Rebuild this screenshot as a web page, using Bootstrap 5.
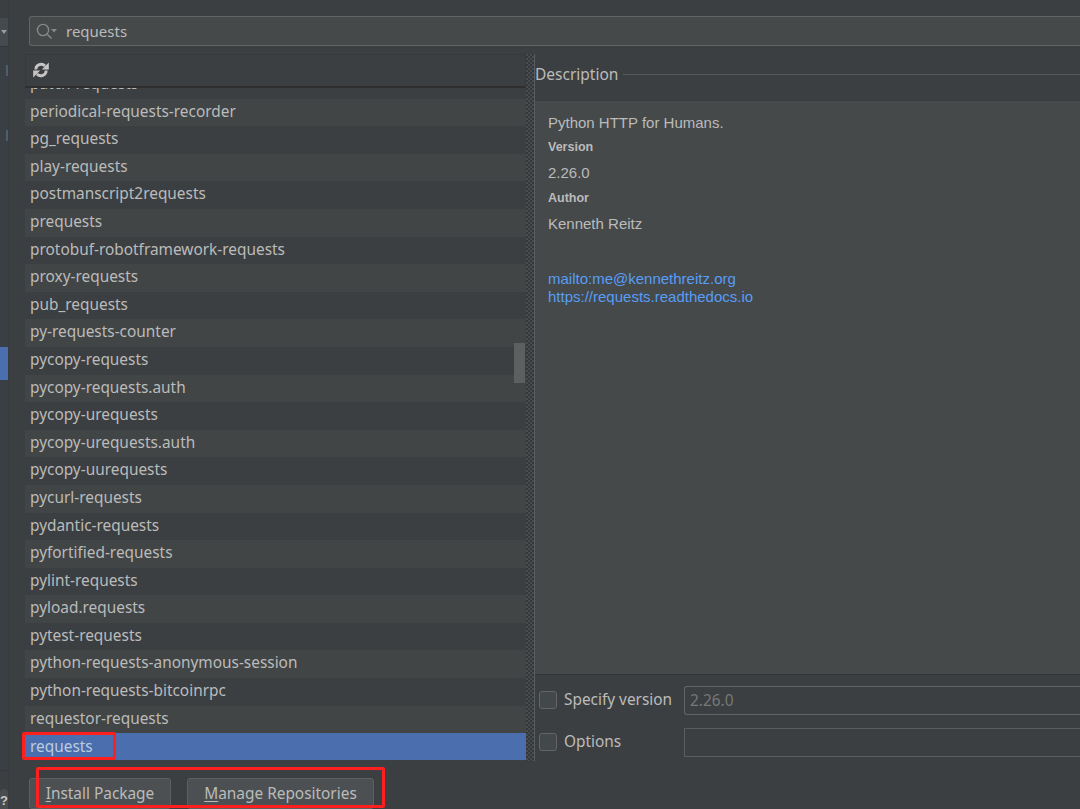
<!DOCTYPE html>
<html lang="en">
<head>
<meta charset="utf-8">
<title>Available Packages</title>
<link href="https://cdn.jsdelivr.net/npm/bootstrap@5.3.0/dist/css/bootstrap.min.css" rel="stylesheet">
<style>
html,body{height:809px;overflow:hidden;background:#3c3f41;}
body{font-family:"Noto Sans",sans-serif;color:#bbbbbb;}
.pg-shell{width:1080px;height:809px;}
.side-strip{width:9px;background:#3a3f46;flex:none;border-right:1px solid #383b3d;overflow:hidden;}
.side-top{height:18px;background:#3c3f41;}
.side-drop{height:29px;background:#454a4e;border-bottom:1px solid #33363a;position:relative;}
.side-drop::after{content:"";position:absolute;left:1px;top:12px;border:3px solid transparent;border-top:4px solid #9a9da0;}
.side-tick{width:2px;height:11px;background:#4c5d70;margin-left:6px;}
.tick-a{margin-top:18px;}
.tick-b{margin-top:54px;}
.side-sel{height:33px;margin-top:206px;background:#4b6eaf;width:8px;}
.side-end{height:39px;margin-top:390px;background:#3c3f41;border-top:1px solid #35383a;padding-top:18px;}
.side-help{width:8px;height:21px;background:#4a4d4f;border-radius:4px 4px 0 0;font:700 13px/24px "Liberation Sans",sans-serif;color:#c8c8c8;text-align:center;}
.dlg{flex:1;min-width:0;height:809px;background:#3c3f41;}
.search-row{height:30px;margin:16px 0 0 20px;background:#45494a;border:1px solid #646464;border-right:0;border-radius:3px 0 0 3px;font-size:15px;line-height:28px;padding-left:36px;position:relative;}
.search-ico{position:absolute;left:6px;top:6px;}
.mid-area{height:707px;margin-top:8px;}
.pkg-pane{width:501px;margin-left:16px;flex:none;}
.pkg-tools{height:34px;border:1px solid #36393a;border-bottom:2px solid #2f2f2f;padding:7px 0 0 7px;background:#3c3f41;}
.pkg-tools svg{display:block;}
.pkg-scroll{height:672px;overflow:hidden;position:relative;background:#3c3f41;}
.pkg-rows{margin-top:-17px;}
.pkg-row{height:27.6px;line-height:25.8px;padding-left:5px;font-size:15.4px;white-space:nowrap;}
.pkg-row:nth-child(even){background:#414546;}
.pkg-row.sel{background:#4b6eaf;color:#bbccdd;line-height:27px;}
.scroll-thumb{position:absolute;right:1px;top:255px;width:11px;height:40px;background:#5d6061;}
.split-bar{width:9px;flex:none;height:707px;border-right:1px solid #5a5d5e;background:repeating-conic-gradient(#35383a 0 25%,#494c4e 0 50%) 0 0/4px 4px;}
.desc-pane{flex:1;min-width:0;}
.desc-head{height:46px;font-size:15.5px;display:flex;align-items:center;padding-bottom:5px;}
.desc-head i{display:block;flex:1;height:1px;background:#55585a;margin-left:5px;}
.desc-body{height:575px;background:#45494a;border-top:1px solid #3a3d3e;border-bottom:1px solid #323435;padding:14px 0 0 13px;font-family:"Liberation Sans",sans-serif;font-size:15px;}
.desc-body p{margin:0;}
.d-text{height:16px;line-height:16px;}
.d-label{font-weight:700;font-size:12.5px;line-height:14px;}
.gap-ver{margin-top:9px!important;}
.gap-val{margin-top:11px!important;}
.gap-auth{margin-top:10px!important;}
.gap-links{margin-top:38px!important;}
.d-link{color:#589df6;height:18px;line-height:18px;}
.opt-row{height:42px;font-size:15.4px;}
.opt-first{margin-top:4px;}
.fake-check{width:18px;height:18px;border:1px solid #646464;border-radius:3px;background:#43494a;margin:0 7px 0 4px;flex:none;}
.opt-label{width:120px;flex:none;}
.opt-input{flex:1;height:29px;border:1px solid #5a5d5e;border-right:0;font-size:15.4px;line-height:27px;padding-left:5px;color:#777;}
.opt-input.ver{border-color:#646464;border-radius:3px 0 0 3px;background:#3c3f41;}
.act-row{margin:17px 0 0 20px;gap:16px;}
.act-btn{height:31px;padding:0;background:#4c5052;color:#bbb;border:1px solid #5e6060;border-radius:3px;font-size:15.4px;line-height:27px;text-align:center;}
.act-btn u{text-underline-offset:2px;}
.btn-install{width:142px;}
.btn-manage{width:187px;}
.red-box{position:absolute;border:3px solid #ff1f1f;border-radius:2px;pointer-events:none;}
.red-a{left:22px;top:732px;width:94px;height:28px;}
.red-b{left:36px;top:767px;width:349px;height:41px;}
</style>
</head>
<body>
<div class="pg-shell d-flex position-relative">
  <div class="side-strip">
    <div class="side-top"></div>
    <div class="side-drop"></div>
    <div class="side-tick tick-a"></div>
    <div class="side-tick tick-b"></div>
    <div class="side-sel"></div>
    <div class="side-end"><div class="side-help">?</div></div>
  </div>
  <div class="dlg">
    <div class="search-row">
      <svg class="search-ico" width="24" height="18" viewBox="0 0 24 18" fill="none" stroke="#85898b" stroke-width="1.4"><circle cx="7" cy="7" r="5.6"/><path d="M11 11l4.500 4.500"/><path d="M15 6h6l-3 3.500z" fill="#85898b" stroke="none"/></svg>
      requests
    </div>
    <div class="mid-area d-flex">
      <div class="pkg-pane">
        <div class="pkg-tools">
          <svg width="16" height="16" viewBox="0 0 16 16" fill="#c6c6c6" stroke="none"><path d="M2.800 7.500A5.300 5.300 0 0 1 12 4" fill="none" stroke="#c6c6c6" stroke-width="2.800"/><path d="M15.800 .6v7H8.800z"/><path d="M13.200 8.500A5.300 5.300 0 0 1 4 12" fill="none" stroke="#c6c6c6" stroke-width="2.800"/><path d="M.2 15.400v-7h7z"/></svg>
        </div>
        <div class="pkg-scroll">
          <div class="pkg-rows">
            <div class="pkg-row">patch-requests</div>
            <div class="pkg-row">periodical-requests-recorder</div>
            <div class="pkg-row">pg_requests</div>
            <div class="pkg-row">play-requests</div>
            <div class="pkg-row">postmanscript2requests</div>
            <div class="pkg-row">prequests</div>
            <div class="pkg-row">protobuf-robotframework-requests</div>
            <div class="pkg-row">proxy-requests</div>
            <div class="pkg-row">pub_requests</div>
            <div class="pkg-row">py-requests-counter</div>
            <div class="pkg-row">pycopy-requests</div>
            <div class="pkg-row">pycopy-requests.auth</div>
            <div class="pkg-row">pycopy-urequests</div>
            <div class="pkg-row">pycopy-urequests.auth</div>
            <div class="pkg-row">pycopy-uurequests</div>
            <div class="pkg-row">pycurl-requests</div>
            <div class="pkg-row">pydantic-requests</div>
            <div class="pkg-row">pyfortified-requests</div>
            <div class="pkg-row">pylint-requests</div>
            <div class="pkg-row">pyload.requests</div>
            <div class="pkg-row">pytest-requests</div>
            <div class="pkg-row">python-requests-anonymous-session</div>
            <div class="pkg-row">python-requests-bitcoinrpc</div>
            <div class="pkg-row">requestor-requests</div>
            <div class="pkg-row sel">requests</div>
          </div>
          <div class="scroll-thumb"></div>
        </div>
      </div>
      <div class="split-bar"></div>
      <div class="desc-pane">
        <div class="desc-head">Description<i></i></div>
        <div class="desc-body">
          <p class="d-text">Python HTTP for Humans.</p>
          <p class="d-label gap-ver">Version</p>
          <p class="d-text gap-val">2.26.0</p>
          <p class="d-label gap-auth">Author</p>
          <p class="d-text gap-val">Kenneth Reitz</p>
          <p class="d-link gap-links">mailto:me@kennethreitz.org</p>
          <p class="d-link">https://requests.readthedocs.io</p>
        </div>
        <div class="opt-row opt-first d-flex align-items-center"><span class="fake-check"></span><span class="opt-label">Specify version</span><span class="opt-input ver">2.26.0</span></div>
        <div class="opt-row d-flex align-items-center"><span class="fake-check"></span><span class="opt-label">Options</span><span class="opt-input"></span></div>
      </div>
    </div>
    <div class="act-row d-flex">
      <button type="button" class="act-btn btn-install"><u>I</u>nstall Package</button>
      <button type="button" class="act-btn btn-manage"><u>M</u>anage Repositories</button>
    </div>
  </div>
  <div class="red-box red-a"></div>
  <div class="red-box red-b"></div>
</div>
<script src="https://cdn.jsdelivr.net/npm/bootstrap@5.3.0/dist/js/bootstrap.bundle.min.js"></script>
</body>
</html>
